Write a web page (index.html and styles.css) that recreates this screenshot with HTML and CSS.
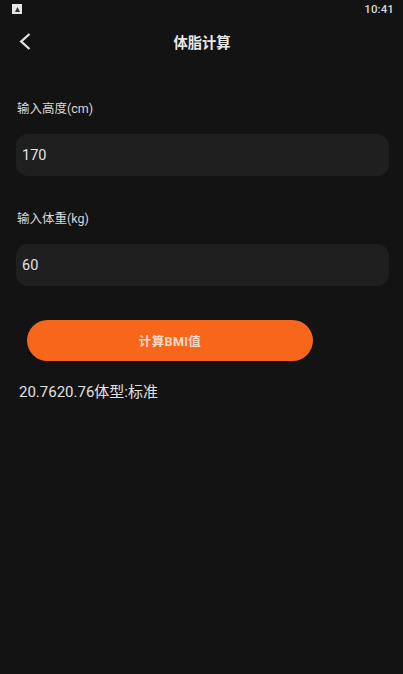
FILE: index.html
```html
<!DOCTYPE html>
<html lang="zh-CN">
<head>
    <meta charset="UTF-8">
    <meta name="viewport" content="width=device-width, initial-scale=1.0">
    <title>体脂计算</title>
    <link rel="stylesheet" href="styles.css">
</head>
<body>
    <div class="status-bar">
        <span class="status-icon">
            <svg width="9" height="9" viewBox="0 0 9 9"><path d="M2 7 L4.5 2 L7 7 Z" fill="#333"/></svg>
        </span>
        <span class="status-time">10:41</span>
    </div>
    <div class="header">
        <button class="back-btn" aria-label="back">
            <svg width="14" height="20" viewBox="0 0 14 20"><path d="M11.5 2 L3.2 9.5 L11.5 17" fill="none" stroke="#e2e2e2" stroke-width="2.3"/></svg>
        </button>
        <h1 class="title">体脂计算</h1>
    </div>
    <div class="content">
        <label class="field-label">输入高度(cm)</label>
        <div class="field">170</div>
        <label class="field-label second">输入体重(kg)</label>
        <div class="field">60</div>
        <button class="calc-btn">计算BMI值</button>
        <div class="result">20.7620.76体型:标准</div>
    </div>
</body>
</html>
```

FILE: styles.css
```css
body {
    margin: 0;
    width: 403px;
    height: 674px;
    overflow: hidden;
    background: #131313;
    color: #e6e6e6;
    font-family: Roboto, "Noto Sans CJK SC", sans-serif;
}
.status-bar {
    height: 18px;
    padding: 0 7px 0 12px;
    display: flex;
    align-items: center;
    justify-content: space-between;
}
.status-icon {
    width: 10px;
    height: 10px;
    background: #e6e6e6;
    display: flex;
    align-items: center;
    justify-content: center;
}
.status-time {
    font-size: 11.5px;
    font-weight: 500;
    color: #d8d8d8;
    letter-spacing: 0.1px;
    margin-right: 2px;
}
.header {
    position: relative;
    height: 48px;
    display: flex;
    align-items: center;
    justify-content: center;
}
.back-btn {
    position: absolute;
    left: 18px;
    top: 14px;
    padding: 0;
    background: none;
    border: none;
    display: flex;
}
.title {
    margin: 0 0 2px 1px;
    font-size: 14.25px;
    font-weight: 700;
    color: #e8e8e8;
}
.content {
    padding: 35px 14px 0 17px;
    display: flex;
    flex-direction: column;
}
.field-label {
    font-size: 12.5px;
    line-height: 16px;
    color: #d8d8d8;
    margin-bottom: 17px;
}
.field-label.second {
    margin-top: 35px;
}
.field {
    height: 42px;
    margin-left: -1px;
    padding-left: 6px;
    border-radius: 12px;
    background: #1f1f1f;
    color: #e2e2e2;
    font-size: 14.5px;
    display: flex;
    align-items: center;
}
.calc-btn {
    width: 286px;
    height: 41px;
    margin: 34px 0 0 10px;
    padding: 0;
    border: none;
    border-radius: 21px;
    background: #f8661c;
    color: #f6dcc8;
    font-family: inherit;
    font-size: 12.5px;
    font-weight: 700;
    letter-spacing: 0.4px;
}
.result {
    margin: 21px 0 0 2px;
    font-size: 15px;
    line-height: 20px;
    color: #e0e0e0;
}
```
